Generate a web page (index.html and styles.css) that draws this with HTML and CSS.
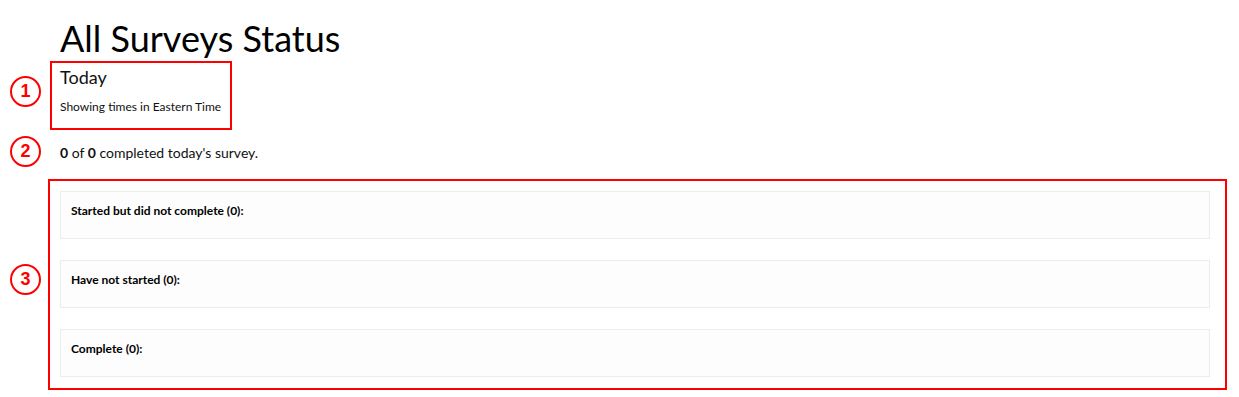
FILE: index.html
```html
<!DOCTYPE html>
<html lang="en">
<head>
<meta charset="utf-8">
<title>All Surveys Status</title>
<link rel="stylesheet" href="styles.css">
</head>
<body>
<div class="page">
  <h1 class="title">All Surveys Status</h1>
  <div class="note-box today-box">
    <div class="today">Today</div>
    <div class="tz">Showing times in Eastern Time</div>
  </div>
  <p class="summary"><b>0</b> of <b>0</b> completed today's survey.</p>
  <div class="note-box groups">
    <div class="panel"><span class="panel-title">Started but did not complete (0):</span></div>
    <div class="panel"><span class="panel-title">Have not started (0):</span></div>
    <div class="panel"><span class="panel-title">Complete (0):</span></div>
  </div>
  <span class="marker marker-1">1</span>
  <span class="marker marker-2">2</span>
  <span class="marker marker-3">3</span>
</div>
</body>
</html>
```

FILE: styles.css
```css
html, body {
  margin: 0;
  padding: 0;
  background: #fff;
}

body {
  font-family: "Lato", "Open Sans", sans-serif;
  color: #111;
}

.page {
  position: relative;
  padding: 18px 0 0 60px;
  min-height: 397px;
  box-sizing: border-box;
}

.title {
  margin: 0;
  font-size: 36px;
  font-weight: 400;
  line-height: 40px;
  color: #000;
}

.note-box {
  border: 2px solid #f00;
  box-sizing: border-box;
}

.today-box {
  width: 182px;
  margin: 3px 0 0 -10px;
  padding: 4px 8px 13px;
}

.today {
  font-size: 18px;
  line-height: 20px;
}

.tz {
  margin-top: 12px;
  font-size: 12px;
  line-height: 16px;
}

.summary {
  margin: 14px 0 0;
  font-size: 14px;
  line-height: 18px;
}

.summary b {
  font-weight: 700;
}

.groups {
  width: 1179px;
  margin: 17px 0 0 -12px;
  padding: 10px 15px 11px 10px;
  display: flex;
  flex-direction: column;
  gap: 21px;
}

.panel {
  height: 48px;
  box-sizing: border-box;
  border: 1px solid #ececec;
  background: #fdfdfd;
  padding: 11px 10px 0;
  font-size: 12px;
  line-height: 16px;
}

.panel-title {
  font-weight: 700;
  color: #000;
}

.marker {
  position: absolute;
  left: 10px;
  width: 31px;
  height: 31px;
  box-sizing: border-box;
  border: 2px solid #f00;
  border-radius: 50%;
  display: flex;
  align-items: center;
  justify-content: center;
  font-family: "Liberation Sans", Arial, sans-serif;
  font-weight: 700;
  font-size: 18px;
  color: #f00;
}

.marker-1 { top: 76px; }
.marker-2 { top: 136px; }
.marker-3 { top: 264px; }
```
